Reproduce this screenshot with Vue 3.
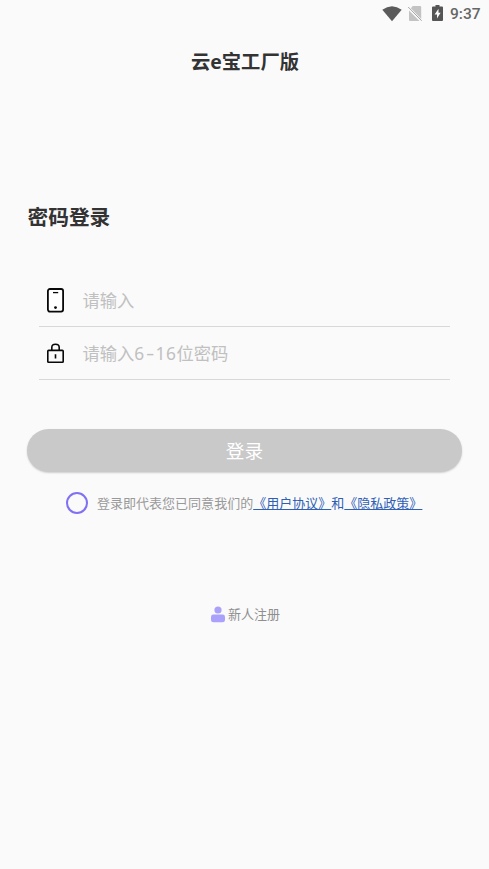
<script setup>
import { ref } from 'vue'

const phone = ref('')
const password = ref('')
const agreed = ref(false)
</script>

<template>
  <div class="screen">
    <div class="status">
      <svg class="wifi" width="20" height="16" viewBox="0 0 20 16"><path d="M.3 3.8Q10-3.3 19.7 3.8L10 15.2Z" fill="#5b5b5b" /></svg>
      <svg class="sim" width="16" height="17" viewBox="0 0 16 17">
        <path d="M5.7 1H13.2Q14.2 1 14.2 2V14L3.9 3.2ZM2 5.4L12.5 16H3Q2 16 2 15Z" fill="#c3c3c3" />
        <path d="M1.2 2L14.7 15.8" stroke="#a5a5a5" stroke-width="1" />
      </svg>
      <svg class="battery" width="11" height="16" viewBox="0 0 11 16">
        <path d="M3.5 0H7.5V1.6H10Q11 1.6 11 2.6V15Q11 16 10 16H1Q0 16 0 15V2.6Q0 1.6 1 1.6H3.5Z" fill="#555" />
        <path d="M6.5 3.8L2.6 9.4H5V13.5L8.6 7.8H6.5Z" fill="#fafafa" />
      </svg>
      <span class="time">9:37</span>
    </div>
    <h1 class="title">云e宝工厂版</h1>
    <h2 class="heading">密码登录</h2>
    <form class="form" @submit.prevent>
      <label class="field">
        <svg class="icon" width="20" height="26" viewBox="0 0 20 26" fill="none" stroke="#080808">
          <rect x="1.9" y="2" width="15.2" height="22.6" rx="2" stroke-width="1.8" fill="#fff" />
          <path d="M7 5.6H12.2" stroke-width="1.3" />
          <circle cx="9.5" cy="20.6" r="1.4" fill="#080808" stroke="none" />
        </svg>
        <span class="entry">
          <span v-if="!phone" class="hint">请输入</span>
          <input v-model="phone" />
        </span>
      </label>
      <label class="field">
        <svg class="icon" width="20" height="26" viewBox="0 0 20 26" fill="none" stroke="#080808">
          <rect x="1.8" y="10.4" width="15.4" height="11.8" rx=".8" stroke-width="1.6" />
          <path d="M5.8 10.2V7.4Q5.8 4.3 9.5 4.3T13.2 7.4V10.2M9.5 14.2V18.6" stroke-width="1.6" />
        </svg>
        <span class="entry">
          <span v-if="!password" class="hint">请输入<span class="digits">6<span class="dash">-</span>16</span>位密码</span>
          <input v-model="password" />
        </span>
      </label>
    </form>
    <button class="submit">登录</button>
    <div class="agreement">
      <span class="radio" @click="agreed = !agreed"></span>
      <span class="terms">登录即代表您已同意我们的<a class="link">《用户协议》</a><span class="and">和</span><a class="link">《隐私政策》</a></span>
    </div>
    <div class="register">
      <svg width="14" height="17" viewBox="0 0 14 17" fill="#aaa1fb"><circle cx="7" cy="4" r="3.6" /><rect y="8.5" width="14" height="7.8" rx="2.4" /></svg>
      <span>新人注册</span>
    </div>
  </div>
</template>

<style>
body {
  background: #fafafa;
}
</style>

<style scoped>
.screen {
  box-sizing: border-box;
  width: 489px;
  height: 869px;
  overflow: hidden;
  background: #fafafa;
  font-family: "Noto Sans", "Noto Sans CJK SC", sans-serif;
  color: #333;
}
.status {
  display: flex;
  justify-content: flex-end;
  align-items: center;
  height: 27px;
  padding-right: 8.5px;
}
.sim {
  margin-left: 5px;
}
.battery {
  margin: 0 6.5px 1px 9px;
}
.time {
  font: 500 15.5px/20px Roboto, sans-serif;
  color: #666;
}
.title {
  margin: 21px 0 0;
  padding-left: 1px;
  font-size: 19.3px;
  line-height: 28px;
  font-weight: 700;
  text-align: center;
}
.heading {
  margin: 126px 0 0 27.5px;
  font-size: 20.7px;
  line-height: 30px;
  font-weight: 700;
}
.form {
  margin: 42px 39px 0;
}
.field {
  display: flex;
  align-items: center;
  box-sizing: border-box;
  height: 53px;
  padding-left: 7px;
  border-bottom: 1px solid #d8d8d8;
}
.icon {
  flex: none;
}
.entry {
  display: grid;
  flex: 1;
  align-items: center;
  height: 30px;
  margin-left: 16.5px;
  padding-top: 2px;
  font-size: 17.3px;
  line-height: 30px;
}
.hint,
input {
  grid-area: 1 / 1;
}
.hint {
  color: #c0c0c0;
  white-space: nowrap;
}
.digits {
  letter-spacing: 0.6px;
}
.dash {
  display: inline-block;
  width: 10.6px;
  text-align: center;
  letter-spacing: 0;
  transform: scaleX(1.5);
}
input {
  min-width: 0;
  padding: 0;
  border: 0;
  outline: 0;
  background: none;
  font: inherit;
  color: #333;
}
.submit {
  display: block;
  width: 435px;
  height: 43px;
  margin: 49px 0 0 27px;
  padding: 0;
  border: 0;
  border-radius: 22px;
  background: #c9c9c9;
  box-shadow: 0 1px 2px rgba(0, 0, 0, 0.18);
  color: #fff;
  font-family: inherit;
  font-size: 18.7px;
  line-height: 43px;
}
.agreement {
  display: flex;
  align-items: center;
  height: 24px;
  margin: 19px 0 0 66px;
}
.radio {
  box-sizing: border-box;
  width: 22px;
  height: 22px;
  margin-right: 9px;
  border: 2px solid #7f70f4;
  border-radius: 50%;
}
.terms {
  font-size: 13.03px;
  line-height: 20px;
  white-space: nowrap;
  color: #999;
}
.link,
.and {
  color: #2f5fb5;
}
.link {
  text-decoration: underline;
}
.register {
  display: flex;
  align-items: center;
  justify-content: center;
  gap: 3px;
  height: 20px;
  margin-top: 89px;
  padding-left: 2px;
  font-size: 13px;
  line-height: 20px;
  color: #8f8f8f;
}
</style>
